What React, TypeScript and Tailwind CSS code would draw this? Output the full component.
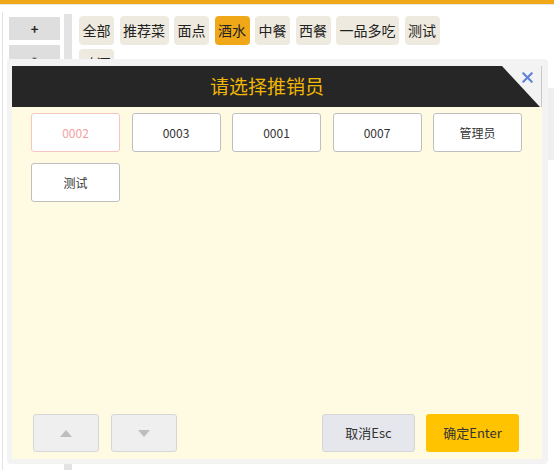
import { X } from "lucide-react";

const tabs = ["全部", "推荐菜", "面点", "酒水", "中餐", "西餐", "一品多吃", "测试", "啤酒"];
const staff = ["0002", "0003", "0001", "0007", "管理员", "测试"];

function Arrow({ up }: { up?: boolean }) {
  return (
    <svg width="12" height="7" viewBox="0 0 12 7">
      <path d={up ? "M0 7 L6 0 L12 7 Z" : "M0 0 L12 0 L6 7 Z"} fill="#bdbdbd" />
    </svg>
  );
}

export default function App() {
  return (
    <div className="relative w-[554px] h-[470px] overflow-hidden bg-white font-['Noto_Sans_CJK_SC','Noto_Sans',sans-serif] text-[#333]">
      <div className="h-[4px] bg-[#f0a818]" />
      <div className="h-[1px] bg-[#e8e8e8]" />
      <div className="flex h-[465px]">
        {/* left side */}
        <div className="flex w-[72px] pt-[7px]">
          <div className="ml-[2px] w-[62px] border-l border-[#e2e2e2] rounded-tr-[6px] bg-white pt-[5px] pl-[6px]">
            <div className="flex flex-col gap-[5px] w-[51px]">
              <button className="h-[23px] bg-[#dedede] text-[13px] font-bold leading-none text-[#222]">+</button>
              <button className="h-[23px] bg-[#dedede] text-[13px] font-bold leading-none text-[#666]">-</button>
            </div>
          </div>
          <div className="w-[8px] bg-[#e3e3e3] mt-[2px]" />
        </div>
        {/* content */}
        <div className="flex-1 flex pl-[7px] pt-[11px]">
          <div className="flex flex-wrap content-start gap-x-[5.5px] gap-y-[4px] w-[370px]">
            {tabs.map((t) => (
              <div
                key={t}
                className={`h-[29px] px-[3.5px] flex items-center rounded-[4px] text-[14px] text-[#222] ${
                  t === "酒水" ? "bg-[#f0a818]" : "bg-[#efeadf]"
                }`}
              >
                {t}
              </div>
            ))}
          </div>
          <div className="ml-auto mt-[72px] w-[6px] h-[72px] bg-[#efefef]" />
        </div>
      </div>

      {/* modal */}
      <div className="absolute left-[7px] top-[59px] w-[541px] h-[405px] rounded-[4px] bg-[#f3f3f3] pt-[7px] pl-[5px] pr-[6px] pb-[5px] flex flex-col">
        <div className="relative h-[41px] border-r border-[#c8c8c8]">
          <div className="absolute inset-0 bg-[#262626] [clip-path:polygon(0_0,490px_0,528px_100%,0_100%)]" />
          <div className="relative h-full flex items-center justify-center pr-[19px] text-[19px] text-[#f2b705]">
            请选择推销员
          </div>
          <X className="absolute right-[5px] top-[3px] text-[#5f82d8]" size={17} strokeWidth={3} />
        </div>
        <div className="flex-1 bg-[#fffae2] flex flex-col">
          <div className="grid grid-cols-[repeat(5,89px)] gap-x-[11.5px] gap-y-[11px] pl-[19px] pt-[6px]">
            {staff.map((s, i) => (
              <div
                key={s}
                className={`h-[39px] rounded-[3px] bg-white border flex items-center justify-center text-[12px] ${
                  i === 0 ? "border-[#f7c4c4] text-[#f5a0a0]" : "border-[#bfbfbf] text-[#333]"
                }`}
              >
                {s}
              </div>
            ))}
          </div>
          <div className="flex-1" />
          <div className="flex items-center pl-[21px] pr-[23px] pb-[7px]">
            <button className="w-[66px] h-[38px] rounded-[3px] bg-[#efefef] border border-[#d6d6d6] flex items-center justify-center">
              <Arrow up />
            </button>
            <button className="ml-[12px] w-[66px] h-[38px] rounded-[3px] bg-[#efefef] border border-[#d6d6d6] flex items-center justify-center">
              <Arrow />
            </button>
            <div className="flex-1" />
            <button className="w-[93px] h-[38px] rounded-[3px] bg-[#e6e7ec] border border-[#d6d6d6] text-[13px] text-[#333]">
              取消Esc
            </button>
            <button className="ml-[11px] w-[93px] h-[38px] rounded-[3px] bg-[#ffc300] text-[13px] text-[#333]">
              确定Enter
            </button>
          </div>
        </div>
      </div>
    </div>
  );
}
